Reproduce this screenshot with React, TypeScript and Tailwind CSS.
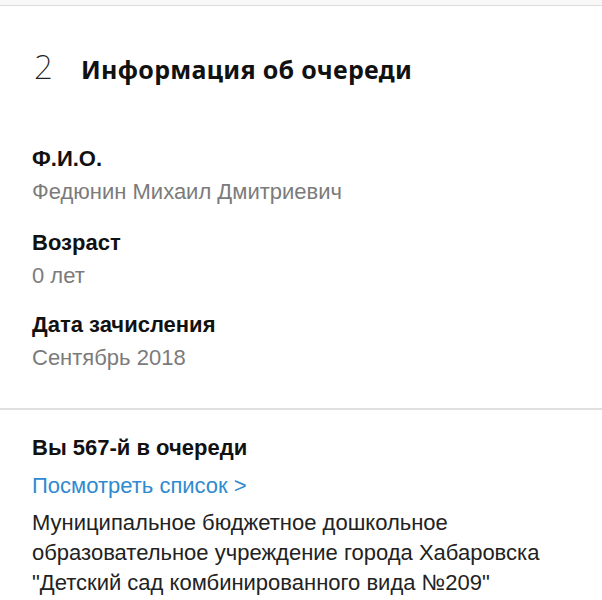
import React from 'react';

const Field: React.FC<{ label: string; value: string; className?: string }> = ({ label, value, className }) => (
    <div className={className}>
        <div className="text-[22px] leading-[28px] font-bold text-[#111]">{label}</div>
        <div className="mt-[5px] text-[22px] leading-[28px] text-[#7b7b7b]">{value}</div>
    </div>
);

export default function App() {
    return (
        <div className="w-[602px] h-[600px] bg-white overflow-hidden" style={{ fontFamily: '"Liberation Sans", Arial, sans-serif' }}>
            <div className="h-[6px] bg-[#f8f8f8] border-b border-[#dcdcdc]" />

            <section className="pt-[45px] pb-[36px] border-b-2 border-[#e0e0e0]">
                <div className="flex items-baseline pl-[34px]" style={{ fontFamily: '"Noto Sans", "Open Sans", sans-serif' }}>
                    <span className="w-[47px] text-[33px] leading-[32px] font-extralight text-[#222]">2</span>
                    <h2 className="text-[25px] leading-[32px] font-bold tracking-[0.3px] text-[#111]">Информация об очереди</h2>
                </div>

                <div className="px-[32px] mt-[60px]">
                    <Field label="Ф.И.О." value="Федюнин Михаил Дмитриевич" />
                    <Field label="Возраст" value="0 лет" className="mt-[23px]" />
                    <Field label="Дата зачисления" value="Сентябрь 2018" className="mt-[21px]" />
                </div>
            </section>

            <section className="px-[32px] pt-[24px]">
                <div className="text-[22px] leading-[28px] font-bold text-[#111]">Вы 567-й в очереди</div>
                <a className="block mt-[10px] text-[22px] leading-[28px] text-[#2f8ad0]">Посмотреть список &gt;</a>
                <p className="mt-[8px] text-[22px] leading-[30px] text-[#222]">
                    Муниципальное бюджетное дошкольное образовательное учреждение города Хабаровска "Детский сад комбинированного вида №209"
                </p>
            </section>
        </div>
    );
}
